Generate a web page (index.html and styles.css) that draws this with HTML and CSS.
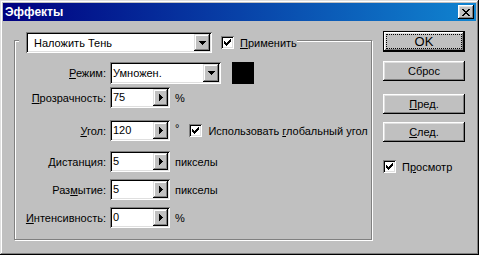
FILE: index.html
```html
<!DOCTYPE html>
<html lang="ru">
<head>
    <meta charset="UTF-8">
    <title>Эффекты</title>
    <link rel="stylesheet" href="styles.css">
</head>
<body>
    <div class="window">
        <!-- заголовок окна -->
        <div class="titlebar">
            <span class="title">Эффекты</span>
            <span class="close-btn">
                <svg width="8" height="7" viewBox="0 0 8 7" shape-rendering="crispEdges"><path d="M0 0h2v1h-2zM6 0h2v1h-2zM1 1h2v1h-2zM5 1h2v1h-2zM2 2h4v1h-4zM3 3h2v1h-2zM2 4h4v1h-4zM1 5h2v1h-2zM5 5h2v1h-2zM0 6h2v1h-2zM6 6h2v1h-2z" fill="#000"/></svg>
            </span>
        </div>

        <div class="main">
            <!-- группа настроек эффекта -->
            <div class="group">
                <div class="group-head">
                    <div class="select select-effect">
                        <span class="select-text">Наложить Тень</span>
                        <span class="drop-btn"><svg width="7" height="4" viewBox="0 0 7 4" shape-rendering="crispEdges"><path d="M0 0h7v1h-7zM1 1h5v1h-5zM2 2h3v1h-3zM3 3h1v1h-1z" fill="#000"/></svg></span>
                    </div>
                    <div class="check">
                        <span class="box"><svg width="7" height="7" viewBox="0 0 7 7" shape-rendering="crispEdges"><path d="M6 0h1v3h-1zM5 1h1v3h-1zM4 2h1v3h-1zM3 3h1v3h-1zM2 4h1v3h-1zM1 3h1v3h-1zM0 2h1v3h-1z" fill="#000"/></svg></span>
                        <span><u>П</u>рименить</span>
                    </div>
                </div>

                <div class="row row-mode">
                    <span class="lbl"><u>Р</u>ежим:</span>
                    <div class="select select-mode">
                        <span class="select-text">Умножен.</span>
                        <span class="drop-btn"><svg width="7" height="4" viewBox="0 0 7 4" shape-rendering="crispEdges"><path d="M0 0h7v1h-7zM1 1h5v1h-5zM2 2h3v1h-3zM3 3h1v1h-1z" fill="#000"/></svg></span>
                    </div>
                    <span class="swatch"></span>
                </div>

                <div class="row row-opacity">
                    <span class="lbl"><u>П</u>розрачность:</span>
                    <div class="spin"><span class="spin-val">75</span><span class="spin-btn"><svg width="4" height="7" viewBox="0 0 4 7" shape-rendering="crispEdges"><path d="M0 0h1v7h-1zM1 1h1v5h-1zM2 2h1v3h-1zM3 3h1v1h-1z" fill="#000"/></svg></span></div>
                    <span class="unit">%</span>
                </div>

                <div class="row row-angle">
                    <span class="lbl"><u>У</u>гол:</span>
                    <div class="spin"><span class="spin-val">120</span><span class="spin-btn"><svg width="4" height="7" viewBox="0 0 4 7" shape-rendering="crispEdges"><path d="M0 0h1v7h-1zM1 1h1v5h-1zM2 2h1v3h-1zM3 3h1v1h-1z" fill="#000"/></svg></span></div>
                    <span class="unit unit-deg">°</span>
                    <div class="check check-global">
                        <span class="box"><svg width="7" height="7" viewBox="0 0 7 7" shape-rendering="crispEdges"><path d="M6 0h1v3h-1zM5 1h1v3h-1zM4 2h1v3h-1zM3 3h1v3h-1zM2 4h1v3h-1zM1 3h1v3h-1zM0 2h1v3h-1z" fill="#000"/></svg></span>
                        <span>Использовать <u>г</u>лобальный угол</span>
                    </div>
                </div>

                <div class="row row-distance">
                    <span class="lbl"><u>Д</u>истанция:</span>
                    <div class="spin"><span class="spin-val">5</span><span class="spin-btn"><svg width="4" height="7" viewBox="0 0 4 7" shape-rendering="crispEdges"><path d="M0 0h1v7h-1zM1 1h1v5h-1zM2 2h1v3h-1zM3 3h1v1h-1z" fill="#000"/></svg></span></div>
                    <span class="unit">пикселы</span>
                </div>

                <div class="row row-blur">
                    <span class="lbl">Раз<u>м</u>ытие:</span>
                    <div class="spin"><span class="spin-val">5</span><span class="spin-btn"><svg width="4" height="7" viewBox="0 0 4 7" shape-rendering="crispEdges"><path d="M0 0h1v7h-1zM1 1h1v5h-1zM2 2h1v3h-1zM3 3h1v1h-1z" fill="#000"/></svg></span></div>
                    <span class="unit">пикселы</span>
                </div>

                <div class="row row-intensity">
                    <span class="lbl"><u>И</u>нтенсивность:</span>
                    <div class="spin"><span class="spin-val">0</span><span class="spin-btn"><svg width="4" height="7" viewBox="0 0 4 7" shape-rendering="crispEdges"><path d="M0 0h1v7h-1zM1 1h1v5h-1zM2 2h1v3h-1zM3 3h1v1h-1z" fill="#000"/></svg></span></div>
                    <span class="unit">%</span>
                </div>
            </div>

            <!-- кнопки справа -->
            <div class="side">
                <div class="btn btn-default"><span class="focus">OK</span></div>
                <div class="btn btn-reset">Сброс</div>
                <div class="btn btn-prev"><u>П</u>ред.</div>
                <div class="btn btn-next"><u>С</u>лед.</div>
                <div class="check check-preview">
                    <span class="box"><svg width="7" height="7" viewBox="0 0 7 7" shape-rendering="crispEdges"><path d="M6 0h1v3h-1zM5 1h1v3h-1zM4 2h1v3h-1zM3 3h1v3h-1zM2 4h1v3h-1zM1 3h1v3h-1zM0 2h1v3h-1z" fill="#000"/></svg></span>
                    <span>П<u>р</u>осмотр</span>
                </div>
            </div>
        </div>
    </div>
</body>
</html>
```

FILE: styles.css
```css
body {
    margin: 0;
    font-family: "Liberation Sans", Arial, sans-serif;
    font-size: 11px;
    color: #000;
    background: #c0c0c0;
}

u {
    text-decoration: underline;
    text-underline-offset: 1px;
}

.window {
    width: 479px;
    height: 255px;
    box-sizing: border-box;
    padding: 3px;
    background: #c0c0c0;
    box-shadow: inset -1px -1px #000, inset 1px 1px #dfdfdf, inset -2px -2px #808080, inset 2px 2px #fff;
}

.titlebar {
    height: 18px;
    display: flex;
    align-items: center;
    justify-content: space-between;
    padding: 0 2px 0 2px;
    background: linear-gradient(to right, #000080, #1084d0);
}

.title {
    color: #fff;
    font-weight: bold;
    font-size: 12px;
}

.close-btn {
    width: 16px;
    height: 14px;
    display: flex;
    align-items: center;
    justify-content: center;
    background: #c0c0c0;
    box-shadow: inset -1px -1px #000, inset 1px 1px #fff, inset -2px -2px #808080, inset 2px 2px #dfdfdf;
}

.main {
    display: flex;
    margin-top: 10px;
    margin-left: 11px;
}

/* рамка группы */
.group {
    width: 356px;
    margin-top: 9px;
    padding-bottom: 11px;
    border: 1px solid #808080;
    box-shadow: inset 1px 1px #fff, 1px 1px #fff;
    align-self: flex-start;
}

.group-head {
    display: flex;
    align-items: center;
    margin-top: -9px;
    margin-left: 4px;
    padding: 0 0 0 7px;
    width: fit-content;
    background: #c0c0c0;
}

.select {
    display: flex;
    align-items: center;
    height: 21px;
    box-sizing: border-box;
    padding: 2px;
    background: #fff;
    box-shadow: inset 1px 1px #808080, inset -1px -1px #fff, inset 2px 2px #000, inset -2px -2px #dfdfdf;
}

.select-effect {
    width: 186px;
}

.select-effect .select-text {
    padding-left: 6px;
}

.select-mode {
    width: 111px;
    height: 22px;
}

.select-text {
    flex: 1;
    padding-left: 1px;
    white-space: nowrap;
}

.drop-btn, .spin-btn {
    display: flex;
    align-items: center;
    justify-content: center;
    align-self: stretch;
    width: 16px;
    background: #c0c0c0;
    box-shadow: inset -1px -1px #000, inset 1px 1px #dfdfdf, inset -2px -2px #808080, inset 2px 2px #fff;
}

.check {
    display: flex;
    align-items: center;
    margin-left: 9px;
    white-space: nowrap;
}

.box {
    width: 13px;
    height: 13px;
    box-sizing: border-box;
    display: flex;
    align-items: center;
    justify-content: center;
    margin-right: 6px;
    background: #fff;
    box-shadow: inset 1px 1px #808080, inset -1px -1px #fff, inset 2px 2px #000, inset -2px -2px #dfdfdf;
}

/* строки параметров */
.row {
    display: flex;
    align-items: center;
    height: 21px;
}

.lbl {
    width: 91px;
    text-align: right;
    margin-right: 4px;
    white-space: nowrap;
}

.spin {
    display: flex;
    width: 60px;
    height: 21px;
    box-sizing: border-box;
    padding: 2px;
    background: #fff;
    box-shadow: inset 1px 1px #808080, inset -1px -1px #fff, inset 2px 2px #000, inset -2px -2px #dfdfdf;
}

.spin-val {
    flex: 1;
    padding-left: 1px;
    line-height: 17px;
}

.spin-btn {
    width: 15px;
}

.unit {
    margin-left: 5px;
}

.unit-deg {
    margin-top: -6px;
}

.check-global {
    margin-left: 10px;
}

.swatch {
    width: 22px;
    height: 22px;
    margin-left: 11px;
    background: #000;
}

.row-mode { margin-top: 9px; height: 22px; }
.row-opacity { margin-top: 3px; }
.row-angle { margin-top: 12px; }
.row-distance { margin-top: 10px; }
.row-blur { margin-top: 7px; }
.row-intensity { margin-top: 7px; }

/* кнопки */
.side {
    display: flex;
    flex-direction: column;
    width: 82px;
    margin-left: 11px;
}

.btn {
    height: 20px;
    display: flex;
    align-items: center;
    justify-content: center;
    background: #c0c0c0;
    box-shadow: inset -1px -1px #000, inset 1px 1px #fff, inset -2px -2px #808080, inset 2px 2px #dfdfdf;
}

.btn-default {
    height: 21px;
    box-sizing: border-box;
    border: 1px solid #000;
    padding: 3px;
}

.focus {
    flex: 1;
    align-self: stretch;
    display: flex;
    align-items: center;
    justify-content: center;
    outline: 1px dotted #000;
    font-size: 13px;
}

.btn-reset { margin-top: 9px; }
.btn-prev { margin-top: 13px; }
.btn-next { margin-top: 8px; }

.check-preview {
    margin-left: 0;
    margin-top: 18px;
}
```
